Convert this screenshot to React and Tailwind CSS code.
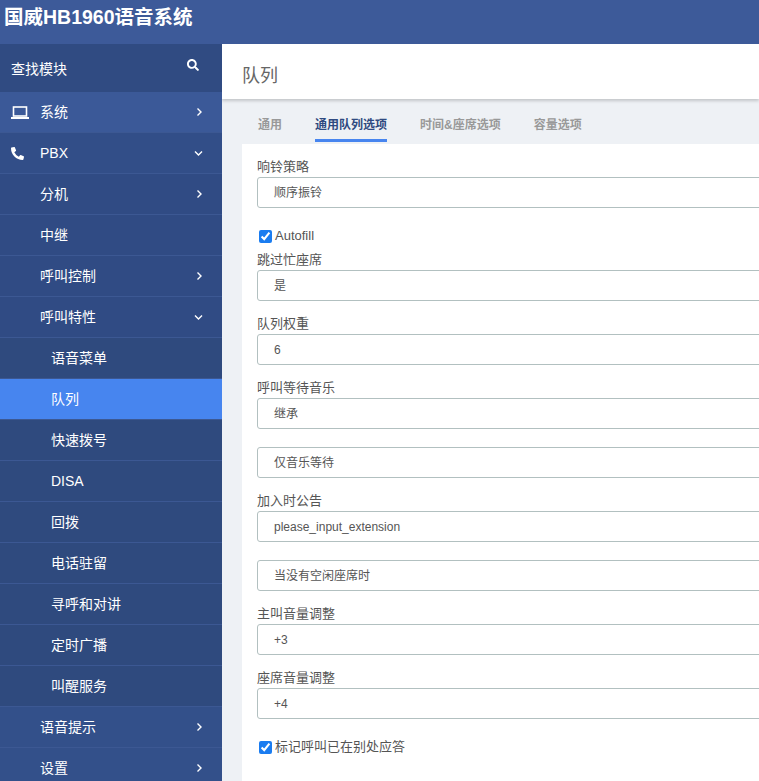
import React from 'react';
import { FaPhoneAlt, FaSearch } from 'react-icons/fa';

const font = { fontFamily: '"Liberation Sans", "Noto Sans CJK SC", sans-serif' };

function ChevronRight() {
  return (
    <svg width="7" height="10" viewBox="0 0 7 10" className="shrink-0">
      <polyline points="1.5,1.5 5,5 1.5,8.5" fill="none" stroke="white" strokeWidth="1.4" />
    </svg>
  );
}

function ChevronDown() {
  return (
    <svg width="9" height="7" viewBox="0 0 9 7" className="shrink-0">
      <polyline points="1,1.5 4.5,5 8,1.5" fill="none" stroke="white" strokeWidth="1.4" />
    </svg>
  );
}

function Laptop() {
  return (
    <svg width="18" height="13" viewBox="0 0 18 13">
      <rect x="2.5" y="1" width="13" height="9" fill="none" stroke="white" strokeWidth="1.6" />
      <rect x="0" y="11" width="18" height="2" fill="white" />
    </svg>
  );
}

const menu = [
  { name: '系统', level: 0, icon: 'laptop', arrow: 'right', bg: 'bg-[#3b5998]' },
  { name: 'PBX', level: 0, icon: 'phone', arrow: 'down', bg: 'bg-[#324e88]' },
  { name: '分机', level: 1, arrow: 'right' },
  { name: '中继', level: 1 },
  { name: '呼叫控制', level: 1, arrow: 'right' },
  { name: '呼叫特性', level: 1, arrow: 'down' },
  { name: '语音菜单', level: 2 },
  { name: '队列', level: 2, active: true },
  { name: '快速拨号', level: 2 },
  { name: 'DISA', level: 2 },
  { name: '回拨', level: 2 },
  { name: '电话驻留', level: 2 },
  { name: '寻呼和对讲', level: 2 },
  { name: '定时广播', level: 2 },
  { name: '叫醒服务', level: 2 },
  { name: '语音提示', level: 0, arrow: 'right', bg: 'bg-[#33508a]' },
  { name: '设置', level: 0, arrow: 'right', bg: 'bg-[#33508a]' },
];

function MenuRow({ item }) {
  let bg = item.bg;
  if (!bg) bg = item.level === 1 ? 'bg-[#304b84]' : 'bg-[#2f4a7e]';
  if (item.active) bg = 'bg-[#4785ef]';
  return (
    <div className={`flex h-[41px] shrink-0 items-center border-b border-[#3c5893] pr-[19px] text-[14px] text-white ${bg}`}>
      <div className="flex w-[40px] shrink-0 items-center justify-start pl-[11px]">
        {item.icon === 'laptop' && <Laptop />}
        {item.icon === 'phone' && <FaPhoneAlt className="h-[13px] w-[13px]" />}
      </div>
      <span className={`flex-1 ${item.level === 2 ? 'pl-[11px]' : ''}`}>{item.name}</span>
      {item.arrow === 'right' && <ChevronRight />}
      {item.arrow === 'down' && <ChevronDown />}
    </div>
  );
}

function Field({ label, value, className = '' }) {
  return (
    <div className={className}>
      {label && <div className="h-[20px] text-[13px] leading-[20px] text-[#555]">{label}</div>}
      <div className="flex h-[31px] w-[560px] items-center rounded-[3px] border border-[#b2c0c0] pl-[16px] text-[12px] text-[#555]">
        {value}
      </div>
    </div>
  );
}

function Check({ label, className = '' }) {
  return (
    <label className={`flex h-[20px] items-center gap-[3px] pl-[2px] text-[13px] text-[#555] ${className}`}>
      <input type="checkbox" checked readOnly className="m-0 h-[13px] w-[13px] accent-[#1a7cf0]" />
      {label}
    </label>
  );
}

export default function App() {
  const tabs = ['通用', '通用队列选项', '时间&座席选项', '容量选项'];
  return (
    <div className="flex h-screen w-full flex-col overflow-hidden bg-[#eef1f5]" style={font}>
      <header className="flex h-[44px] shrink-0 items-start bg-[#3d5a99] pl-[4px] pt-[7px]">
        <h1 className="text-[19.5px] font-bold leading-[20px] text-white">国威HB1960语音系统</h1>
      </header>

      <div className="flex min-h-0 flex-1">
        {/* Sidebar */}
        <aside className="flex w-[222px] shrink-0 flex-col overflow-hidden bg-[#2f4a7e]">
          <div className="flex h-[48px] shrink-0 items-center justify-between bg-[#304b82] pl-[11px] pr-[23px] text-[14px] text-white">
            <span className="pt-[2px]">查找模块</span>
            <FaSearch className="mb-[6px] h-[12px] w-[12px]" />
          </div>
          {menu.map((item) => (
            <MenuRow key={item.name} item={item} />
          ))}
        </aside>

        {/* Main */}
        <main className="flex min-w-0 flex-1 flex-col overflow-hidden">
          <div className="relative z-10 h-[55px] shrink-0 bg-white pl-[20px] pt-[22px] shadow-[0_2px_3px_rgba(0,0,0,0.18)]">
            <div className="text-[18px] leading-[20px] text-[#666]">队列</div>
          </div>

          <div className="flex gap-[33px] pl-[36px] pt-[18px] text-[12px] font-bold leading-[16px]">
            {tabs.map((t) => (
              <div
                key={t}
                className={`border-b-[3px] pb-[6px] ${t === '通用队列选项' ? 'border-[#4785ef] text-[#2f4a80]' : 'border-transparent text-[#999]'}`}
              >
                {t}
              </div>
            ))}
          </div>

          <div className="ml-[20px] mt-[2px] w-[640px] flex-1 bg-white pl-[15px] pt-[13px]">
            <Field label="响铃策略" value="顺序振铃" />
            <Check label="Autofill" className="mt-[18px]" />
            <Field label="跳过忙座席" value="是" className="mt-[4px]" />
            <Field label="队列权重" value="6" className="mt-[13px]" />
            <Field label="呼叫等待音乐" value="继承" className="mt-[13px]" />
            <Field value="仅音乐等待" className="mt-[18px]" />
            <Field label="加入时公告" value="please_input_extension" className="mt-[13px]" />
            <Field value="当没有空闲座席时" className="mt-[18px]" />
            <Field label="主叫音量调整" value="+3" className="mt-[13px]" />
            <Field label="座席音量调整" value="+4" className="mt-[13px]" />
            <Check label="标记呼叫已在别处应答" className="mt-[18px]" />
          </div>
        </main>
      </div>
    </div>
  );
}
